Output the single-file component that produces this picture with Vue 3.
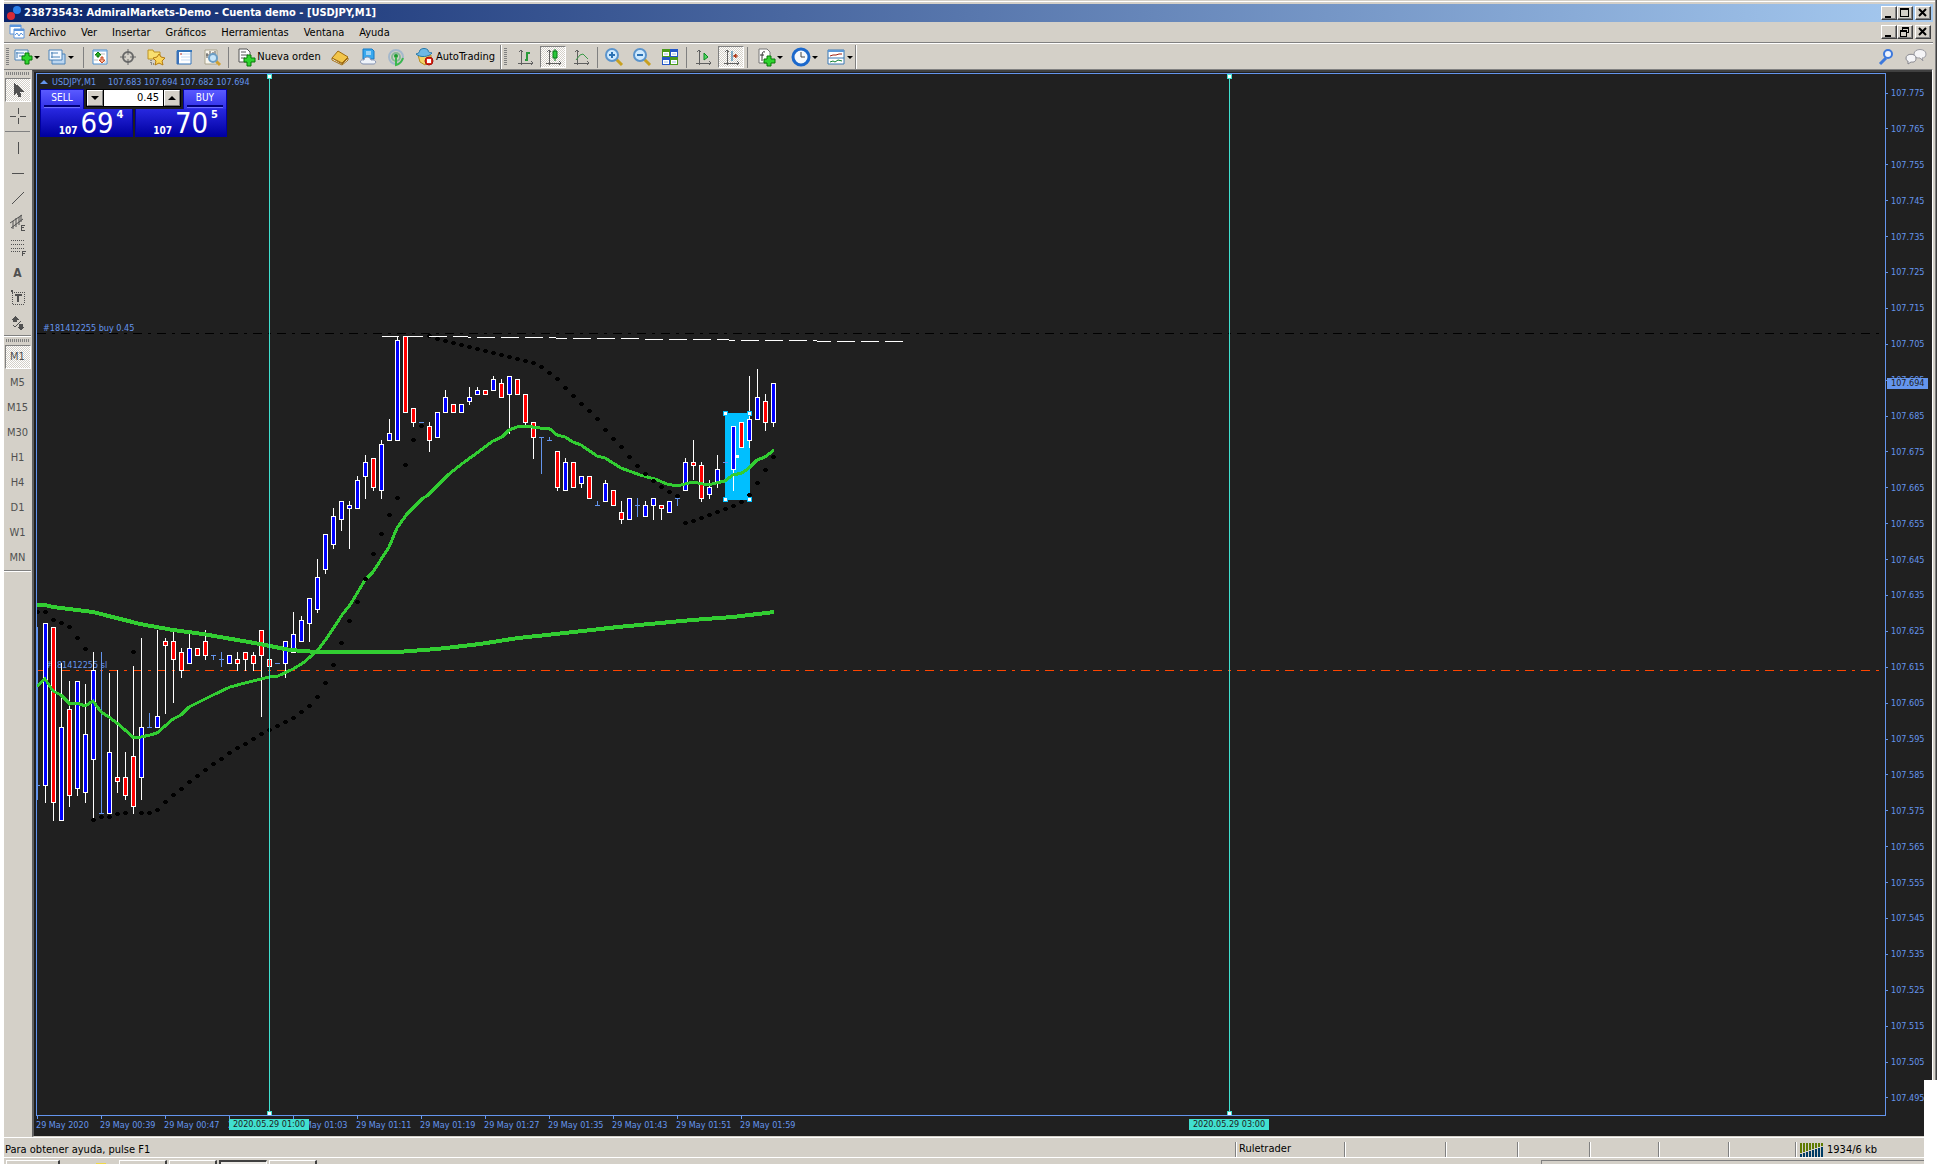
<script setup>
const menus = ['Archivo', 'Ver', 'Insertar', 'Gráficos', 'Herramientas', 'Ventana', 'Ayuda']
const frames = ['M1', 'M5', 'M15', 'M30', 'H1', 'H4', 'D1', 'W1', 'MN']
const times = ['29 May 2020', '29 May 00:39', '29 May 00:47', '29 May 00:55', '29 May 01:03', '29 May 01:11', '29 May 01:19', '29 May 01:27', '29 May 01:35', '29 May 01:43', '29 May 01:51', '29 May 01:59']
const prices = Array.from({ length: 29 }, (_, i) => (107.775 - i * 0.01).toFixed(3))
const cells = [109, 101, 72, 72, 69, 70, 67]

// kind, high, body top, body bottom, low (u = up, d = down, n = unchanged)
const bars = [
  ['n', 627, 785, 785, 800], ['u', 623, 623, 786, 803], ['d', 627, 627, 803, 821], ['u', 663, 727, 821, 821],
  ['d', 681, 709, 796, 807], ['u', 681, 681, 789, 796], ['u', 684, 734, 793, 803], ['u', 652, 670, 760, 818],
  ['n', 652, 813, 813, 814], ['u', 673, 752, 814, 814], ['d', 670, 777, 782, 793], ['d', 752, 777, 796, 800],
  ['d', 666, 756, 807, 814], ['u', 638, 727, 778, 800], ['n', 713, 727, 727, 728], ['u', 630, 716, 728, 728],
  ['d', 638, 641, 646, 714], ['d', 630, 641, 660, 703], ['d', 648, 652, 671, 678], ['u', 634, 648, 664, 664],
  ['d', 648, 648, 656, 656], ['d', 630, 641, 656, 660], ['n', 655, 655, 655, 660], ['n', 652, 659, 659, 667],
  ['u', 655, 655, 664, 664], ['d', 652, 659, 664, 671], ['d', 652, 652, 660, 671], ['d', 652, 655, 664, 671],
  ['d', 630, 630, 656, 717], ['d', 659, 659, 667, 667], ['n', 663, 663, 663, 664], ['u', 641, 641, 664, 678],
  ['u', 612, 634, 653, 653], ['u', 616, 620, 642, 642], ['u', 598, 598, 624, 642], ['u', 559, 577, 610, 613],
  ['u', 534, 534, 570, 574], ['u', 508, 516, 545, 549], ['u', 501, 501, 520, 531], ['u', 501, 505, 509, 549],
  ['u', 476, 480, 509, 509], ['u', 455, 462, 477, 499], ['d', 458, 458, 488, 491], ['u', 440, 444, 491, 499],
  ['u', 419, 433, 441, 441], ['u', 337, 340, 441, 441], ['d', 336, 336, 413, 413], ['d', 408, 408, 423, 427],
  ['n', 422, 422, 422, 423], ['d', 422, 426, 441, 452], ['u', 412, 412, 438, 438], ['u', 390, 397, 413, 413],
  ['d', 404, 404, 413, 413], ['u', 404, 404, 413, 413], ['u', 387, 397, 402, 405], ['u', 387, 390, 395, 395],
  ['d', 390, 390, 395, 395], ['u', 376, 379, 391, 391], ['d', 379, 383, 398, 398], ['u', 376, 376, 395, 434],
  ['d', 379, 379, 395, 395], ['d', 394, 394, 423, 426], ['d', 422, 422, 438, 459], ['n', 437, 437, 437, 474],
  ['n', 437, 440, 440, 441], ['d', 451, 451, 488, 491], ['u', 458, 462, 491, 491], ['d', 462, 462, 488, 488],
  ['u', 476, 476, 484, 488], ['d', 476, 476, 499, 499], ['n', 501, 505, 505, 506], ['u', 480, 483, 502, 502],
  ['d', 490, 490, 506, 506], ['d', 501, 512, 520, 524], ['u', 498, 498, 520, 520], ['n', 498, 505, 505, 517],
  ['u', 501, 505, 517, 517], ['u', 498, 498, 506, 520], ['d', 505, 505, 509, 520], ['u', 501, 501, 513, 513],
  ['n', 498, 498, 498, 506], ['u', 458, 462, 491, 491], ['d', 440, 462, 466, 480], ['d', 462, 465, 499, 502],
  ['u', 480, 487, 495, 499], ['u', 455, 469, 482, 488], ['n', 462, 462, 462, 463], ['u', 426, 426, 470, 491],
  ['d', 422, 422, 448, 448], ['u', 376, 419, 441, 448], ['u', 369, 397, 420, 420], ['d', 394, 401, 423, 431],
  ['u', 383, 383, 423, 427],
].map(([kind, high, top, bottom, low], i) => ({ kind, high, top, bottom, low, x: 37 + i * 8 }))

const sar = [
  612, 612, 620, 623, 627, 638, 649, 820, 817, 817, 814, 813, 652, 813, 813, 810, 802, 795, 789, 782, 776, 770, 764,
  759, 753, 748, 744, 739, 734, 730, 726, 722, 718, 712, 706, 697, 683, 665, 643, 621, 602, 579, 554, 534, 515, 498,
  465, 440, 426, 336, 339, 341, 343, 345, 347, 349, 351, 353, 355, 357, 359, 361, 363, 367, 373, 379, 388, 396, 404,
  411, 419, 430, 439, 447, 457, 466, 474, 481, 487, 492, 496, 523, 521, 518, 515, 512, 509, 506, 502, 495, 483, 470, 457,
]

const slow = '37,605 45,605 53,607 93,612 140,624 173,630 203,634 260,644 290,650 317,652 397,652 437,649 480,644 518,638 556,634 618,627 692,620 733,617 774,612'
const fast = '37,686 45,679 53,691 61,695 70,704 77,703 85,706 93,701 101,712 109,717 117,723 125,730 133,737 141,737 150,735 157,733 165,726 173,719 181,715 189,707 197,703 213,695 230,687 245,683 261,679 269,677 278,676 293,669 303,663 317,651 327,638 342,615 350,605 365,580 373,572 389,547 397,528 407,514 423,498 427,496 448,475 463,463 470,458 493,441 502,437 509,430 517,427 525,426 540,428 550,429 557,435 565,437 573,442 581,445 597,456 605,458 621,468 640,475 655,479 667,484 677,486 685,484 693,482 703,484 712,484 725,481 733,475 742,473 749,468 757,460 765,457 774,450'
const handles = [[725, 413], [749, 413], [725, 499], [749, 499]]
</script>

<template>
  <div class="window">
    <header class="titlebar">
      <svg class="logo" width="16" height="16" viewBox="0 0 16 16"><circle cx="10" cy="5" r="4" fill="#2a7fe8" /><circle cx="4" cy="11" r="4" fill="#d92b35" /></svg>
      <h1>23873543: AdmiralMarkets-Demo - Cuenta demo - [USDJPY,M1]</h1>
      <div class="wbuttons">
        <button aria-label="Minimizar"><svg width="14" height="12"><path d="M3 9h6v2H3z" /></svg></button>
        <button aria-label="Maximizar"><svg width="14" height="12"><path fill-rule="evenodd" d="M2 1h9v9H2zM3 3v6h7V3z" /></svg></button>
        <button class="close" aria-label="Cerrar"><svg width="14" height="12"><path d="M3 2l7 7M10 2l-7 7" class="cross" /></svg></button>
      </div>
    </header>

    <nav class="menubar">
      <svg class="mdi" width="16" height="16" viewBox="0 0 16 16"><path d="M1 1h11v9H1z" fill="#fff" stroke="#5a94dc" /><path d="M1 2h11" stroke="#5a94dc" stroke-width="2" /><path d="M5 5h10v9H5z" fill="#fff" stroke="#5a94dc" /><path d="M5 6h10" stroke="#5a94dc" stroke-width="2" /><path d="M6 11l2-2 2 3 2-3 2 2" fill="none" stroke="#5a94dc" /></svg>
      <a v-for="m in menus" :key="m" href="#">{{ m }}</a>
      <div class="wbuttons">
        <button aria-label="Minimizar gráfico"><svg width="14" height="12"><path d="M3 9h6v2H3z" /></svg></button>
        <button aria-label="Restaurar gráfico"><svg width="14" height="12"><path fill-rule="evenodd" d="M4 1h7v6H9v4H2V4h2zM5 3v1h4v2h1V3zM3 6v4h5V6z" /></svg></button>
        <button class="close" aria-label="Cerrar gráfico"><svg width="14" height="12"><path d="M3 2l7 7M10 2l-7 7" class="cross" /></svg></button>
      </div>
    </nav>

    <div class="toolbar">
      <i class="grip"></i>
      <button class="tool drop" aria-label="Nuevo gráfico"><svg width="20" height="20" viewBox="0 0 20 20"><path d="M2 3h13v10H2z" fill="#f4f9ff" stroke="#4b82b8" /><path d="M4 5v6M3 6h8M6 9h7" stroke="#4b82b8" /><path d="M9 9h3V6h4v3h3v4h-3v4h-4v-4H9z" fill="#2fd42f" stroke="#087808" /></svg></button>
      <button class="tool drop" aria-label="Perfiles"><svg width="20" height="20" viewBox="0 0 20 20"><path d="M5 7h13v10H5z" fill="#bcd6f0" stroke="#4b82b8" /><path d="M2 3h13v10H2z" fill="#f4f9ff" stroke="#4b82b8" /><path d="M5 5v6M4 6h7M4 10h9" stroke="#4b82b8" /></svg></button>
      <i class="sep"></i>
      <button class="tool" aria-label="Observación del mercado"><svg width="20" height="20" viewBox="0 0 20 20"><path d="M3 3h14v14H3z" fill="#fff" stroke="#4c8fd0" /><path d="M3 4h14" stroke="#6aa8e0" /><path d="M10 7h5M4 13h4M14 15h2" stroke="#bbb" /><path d="M8 5l3 3-2 0v2H7V8H5z" fill="#27b027" stroke="#0c7a0c" /><path d="M12 16l-3-3h2v-3h2v3h2z" fill="#f8b090" stroke="#c84820" /></svg></button>
      <button class="tool" aria-label="Ventana de datos"><svg width="20" height="20" viewBox="0 0 20 20"><circle cx="10" cy="10" r="5" fill="none" stroke="#686868" stroke-width="2" /><path d="M10 2v6M10 12v6M2 10h6M12 10h6" stroke="#686868" /></svg></button>
      <button class="tool" aria-label="Navegador"><svg width="20" height="20" viewBox="0 0 20 20"><path d="M2 3h5l1 2h6v7H2z" fill="#f8df70" stroke="#bd9222" /><path d="M5 13v4h5" fill="none" stroke="#444" stroke-dasharray="1 1" /><path d="M13 7l2 3 4 1-3 3 1 4-4-2-4 2 1-4-3-3 4-1z" fill="#fbd65a" stroke="#b47a10" /></svg></button>
      <button class="tool" aria-label="Terminal"><svg width="20" height="20" viewBox="0 0 20 20"><path d="M3 4h14v13H3z" fill="#fff" stroke="#3475ba" /><path d="M3 4h15" stroke="#3475ba" stroke-width="2" /><path d="M3 5h2v12H3z" fill="#3a70b8" /><path d="M7 7h9M7 10h9M7 13h9" stroke="#c3d9f4" /><path d="M7 6v2" stroke="#c03020" /></svg></button>
      <button class="tool" aria-label="Probador de estrategias"><svg width="20" height="20" viewBox="0 0 20 20"><path d="M3 3h12v14H3z" fill="#f8f6ee" stroke="#aaa48c" /><path d="M5 6v5M4 8h3M8 4v4M11 5v3M13 4v5" stroke="#555" /><path d="M14 14l4 4" stroke="#d0a030" stroke-width="3" /><circle cx="11" cy="11" r="4" fill="#c6e5fa" stroke="#6b9dc4" stroke-width="2" /></svg></button>
      <i class="sep"></i>
      <button class="tool text order"><svg width="20" height="20" viewBox="0 0 20 20"><path d="M3 2h8l3 3v10H3z" fill="#fff" stroke="#555" /><path d="M5 5h5M5 8h7M5 11h4" stroke="#555" /><path d="M8 11h3V8h4v3h4v4h-4v4h-4v-4H8z" fill="#2fd42f" stroke="#087808" /></svg>Nueva orden</button>
      <button class="tool" aria-label="MetaEditor"><svg width="20" height="20" viewBox="0 0 20 20"><path d="M2 11l6-7 10 6-6 6z" fill="#f2c54a" stroke="#a06c10" /><path d="M2 11l10 6 6-6v2l-6 5-10-5z" fill="#fff" stroke="#a06c10" /></svg></button>
      <button class="tool" aria-label="Alojamiento virtual"><svg width="20" height="20" viewBox="0 0 20 20"><path d="M5 2h9l2 2v8H5z" fill="#38a8ee" stroke="#1478c4" /><path d="M8 5h5M8 7h5" stroke="#fff" /><path d="M5 17c-4-1-3-5 1-4 0-4 6-4 7 0 5-1 6 3 3 4z" fill="#eef3fa" stroke="#8290b0" /></svg></button>
      <button class="tool" aria-label="Señales"><svg width="20" height="20" viewBox="0 0 20 20"><circle cx="10" cy="10" r="7" fill="none" stroke="#a4b8cc" stroke-width="2" /><circle cx="10" cy="10" r="4" fill="none" stroke="#86b898" stroke-width="2" /><circle cx="10" cy="9" r="2" fill="#1d9c30" /><path d="M10 10v8c4-1 6-4 7-7" fill="none" stroke="#3cb84c" stroke-width="2" /></svg></button>
      <button class="tool text auto"><svg width="20" height="20" viewBox="0 0 20 20"><path d="M3 8l2 7 5 3 6-5V8z" fill="#f3d466" stroke="#b88d20" /><path d="M1 7c3-1 3-1 4-4 2-2 6-2 8 0 0 3 2 2 4 3-3 4-12 5-16 1z" fill="#6db8e4" stroke="#2878a8" /><circle cx="14" cy="14" r="4" fill="#e02818" stroke="#a01008" /><path d="M12 12h4v4h-4z" fill="#fff" /></svg>AutoTrading</button>
      <i class="edge"></i>
      <i class="grip"></i>
      <button class="tool" aria-label="Gráfico de barras"><svg width="20" height="20" viewBox="0 0 20 20"><path d="M6 3v15M3 16h15M4 5l2-2 2 2M16 14l2 2-2 2" class="axis" /><path d="M12 5v9M12 6h3M10 13h2" stroke="#2a9a3a" stroke-width="2" /></svg></button>
      <button class="tool on" aria-label="Velas japonesas"><svg width="20" height="20" viewBox="0 0 20 20"><path d="M6 3v15M3 16h15M4 5l2-2 2 2M16 14l2 2-2 2" class="axis" /><path d="M12 2v12" stroke="#087818" /><path d="M10 4h4v7h-4z" fill="#28c838" stroke="#087818" /></svg></button>
      <button class="tool" aria-label="Gráfico de líneas"><svg width="20" height="20" viewBox="0 0 20 20"><path d="M6 3v15M3 16h15M4 5l2-2 2 2M16 14l2 2-2 2" class="axis" /><path d="M5 13l4-5 3-1 5 5" fill="none" stroke="#3b9a48" /></svg></button>
      <i class="sep"></i>
      <button class="tool" aria-label="Acercar"><svg width="20" height="20" viewBox="0 0 20 20"><path d="M12 12l6 6" stroke="#c8a020" stroke-width="3" /><circle cx="8" cy="8" r="6" fill="#cfeaff" stroke="#5b94cc" stroke-width="2" /><path d="M8 5v6M5 8h6" stroke="#2c72b4" stroke-width="2" /></svg></button>
      <button class="tool" aria-label="Alejar"><svg width="20" height="20" viewBox="0 0 20 20"><path d="M12 12l6 6" stroke="#c8a020" stroke-width="3" /><circle cx="8" cy="8" r="6" fill="#cfeaff" stroke="#5b94cc" stroke-width="2" /><path d="M5 8h6" stroke="#2c72b4" stroke-width="2" /></svg></button>
      <button class="tool" aria-label="Organizar ventanas"><svg width="20" height="20" viewBox="0 0 20 20"><path d="M2 2h8v8H2zM10 10h8v8h-8z" fill="#4a9a1c" /><path d="M10 2h8v8h-8zM2 10h8v8H2z" fill="#2458c8" /><path d="M3 5h6v4H3zM11 5h6v4h-6zM3 13h6v4H3zM11 13h6v4h-6z" fill="#fff" /><path d="M4 7h4M12 7h4M4 15h4M12 15h4" stroke="#9cc0e0" /></svg></button>
      <i class="sep"></i>
      <button class="tool" aria-label="Desplazamiento automático"><svg width="20" height="20" viewBox="0 0 20 20"><path d="M6 3v15M3 16h15M4 5l2-2 2 2M16 14l2 2-2 2" class="axis" /><path d="M11 6l4 4-4 3z" fill="#50d860" stroke="#0a8a20" /></svg></button>
      <button class="tool on" aria-label="Desplazar gráfico"><svg width="20" height="20" viewBox="0 0 20 20"><path d="M6 3v15M3 16h15M4 5l2-2 2 2M16 14l2 2-2 2" class="axis" /><path d="M11 4v10" stroke="#1d6fa0" /><path d="M17 9h-5M15 7l-2 2 2 2z" stroke="#b03818" fill="#b03818" /></svg></button>
      <i class="sep"></i>
      <button class="tool drop late" aria-label="Indicadores"><svg width="20" height="20" viewBox="0 0 20 20"><path d="M3 2h8l3 3v11H3z" fill="#fff" stroke="#777" /><path d="M9 5c-3-1-3 1-3 9M4 8h4" fill="none" stroke="#333" /><path d="M8 12h3V9h4v3h4v4h-4v3h-4v-3H8z" fill="#2fd42f" stroke="#087808" /></svg></button>
      <button class="tool drop late" aria-label="Periodos"><svg width="20" height="20" viewBox="0 0 20 20"><circle cx="10" cy="10" r="8" fill="#f4f8fc" stroke="#1b68cc" stroke-width="3" /><path d="M10 5v5h4" fill="none" stroke="#444" /></svg></button>
      <button class="tool drop late" aria-label="Plantillas"><svg width="20" height="20" viewBox="0 0 20 20"><path d="M2 3h16v14H2z" fill="#fff" stroke="#3b78b4" /><path d="M2 4h16" stroke="#5b98d8" stroke-width="2" /><path d="M2 11h16" stroke="#3b78b4" /><path d="M4 9l3-1 3 0 3-1 3 0" fill="none" stroke="#a02010" /><path d="M4 15l3-1 2 1 3-2 4 1" fill="none" stroke="#108030" /></svg></button>
      <i class="edge"></i>
      <div class="right">
        <button class="tool" aria-label="Buscar"><svg width="20" height="20" viewBox="0 0 20 20"><path d="M10 11l-6 6" stroke="#3c78dc" stroke-width="3" /><circle cx="12" cy="7" r="4" fill="#eef4ff" stroke="#3c78dc" stroke-width="2" /></svg></button>
        <button class="tool" aria-label="Chat"><svg width="24" height="20" viewBox="0 0 24 20"><path d="M10 7c0-6 12-6 12 0 0 3-2 4-4 4l1 3-3-3c-4 0-6-1-6-4z" fill="#f4f4f6" stroke="#9a9aa0" /><path d="M2 11c0-5 10-5 10 0s-4 4-5 4l-3 2v-3c-1 0-2-1-2-3z" fill="#f4f4f6" stroke="#85858c" /></svg></button>
      </div>
    </div>

    <main class="workspace">
      <aside class="sidebar">
        <i class="hgrip"></i>
        <button class="side on" aria-label="Cursor"><svg width="20" height="20" viewBox="0 0 20 20"><path d="M6 3v12l3-3 2 5 2-1-2-5h4z" fill="#505050" /></svg></button>
        <button class="side" aria-label="Retículo"><svg width="20" height="20" viewBox="0 0 20 20"><path d="M10 2v6M10 12v6M2 10h6M12 10h6" /></svg></button>
        <i class="hsep"></i>
        <button class="side" aria-label="Línea vertical"><svg width="20" height="20" viewBox="0 0 20 20"><path d="M10 4v12" /></svg></button>
        <button class="side" aria-label="Línea horizontal"><svg width="20" height="20" viewBox="0 0 20 20"><path d="M4 10h12" /></svg></button>
        <button class="side" aria-label="Línea de tendencia"><svg width="20" height="20" viewBox="0 0 20 20"><path d="M4 16L16 4" class="smooth" /></svg></button>
        <button class="side" aria-label="Canal equidistante"><svg width="20" height="20" viewBox="0 0 20 20"><path d="M2 10L14 2M3 15L15 6M5 8v8M8 5v9M11 4v8M13 2v7" class="smooth" /><path d="M13 12h4M13 12v5M13 14h3M13 17h4" /></svg></button>
        <button class="side" aria-label="Fibonacci"><svg width="20" height="20" viewBox="0 0 20 20"><path d="M3 2h14M3 6h14M3 10h14M3 13h9" stroke-dasharray="1 1" /><path d="M14 13h4M14 13v5M14 15h3" /></svg></button>
        <button class="side letter">A</button>
        <button class="side" aria-label="Etiqueta"><svg width="20" height="20" viewBox="0 0 20 20"><path d="M4 4h12v12H4z" fill="none" stroke-dasharray="1 1" /><path d="M7 7h7M10 7v7" stroke-width="2" /><path d="M3 3h2" stroke-width="2" /></svg></button>
        <button class="side" aria-label="Flechas"><svg width="20" height="20" viewBox="0 0 20 20"><path d="M7 3l4 4-2 0v2H5V7H3zM13 17l-4-3h2v-3h4v3h2z" fill="#505050" stroke="none" /><path d="M5 12l2 2 6-6" fill="none" class="smooth" /></svg></button>
        <i class="hline"></i>
        <i class="hgrip"></i>
        <button v-for="f in frames" :key="f" class="side" :class="{ on: f === 'M1' }">{{ f }}</button>
        <i class="hline"></i>
      </aside>

      <section class="chart">
        <div class="plot">
          <svg class="canvas">
            <g transform="translate(-37 -74)">
              <path d="M37 333H1879" stroke="#000" class="dashdot" />
              <path d="M37 670H1879" stroke="#ff4500" class="dashdot" />
              <text x="43" y="331">#181412255 buy 0.45</text>
              <text x="45" y="668">#181412255 sl</text>
              <rect x="725" y="413" width="25" height="87" fill="#00bfff" />
              <g v-for="b in bars" :key="b.x">
                <template v-if="b.kind === 'n'">
                  <rect :x="b.x" :y="b.high" width="1" :height="b.low - b.high" fill="#6495ed" />
                  <rect :x="b.x - 2" :y="b.top" width="5" height="1" fill="#6495ed" />
                </template>
                <template v-else>
                  <rect :x="b.x" :y="b.high" width="1" :height="b.low - b.high" fill="#fff" />
                  <rect :x="b.x - 2" :y="b.top" width="5" :height="b.bottom - b.top" fill="#fff" />
                  <rect :x="b.x - 1" :y="b.top + 1" width="3" :height="b.bottom - b.top - 2" :fill="b.kind === 'u' ? '#00f' : '#f00'" />
                </template>
              </g>
              <polyline :points="slow" class="ma slow" />
              <polyline :points="fast" class="ma fast" />
              <path v-for="(y, i) in sar" :key="i" :d="`M${35 + i * 8} ${y - 1}h1v-1h3v1h1v2h-1v1h-3v-1h-1z`" />
              <path d="M381 336L903 342" stroke="#fff" stroke-dasharray="18 6" />
              <path d="M269 76V1113M1229 76V1113" stroke="#40e0d0" />
              <g v-for="x in [269, 1229]" :key="x" fill="#fff" stroke="#40e0d0">
                <rect :x="x - 2" y="74" width="4" height="4" /><rect :x="x - 2" y="1111" width="4" height="4" />
              </g>
              <rect v-for="([x, y], i) in handles" :key="i" :x="x - 2" :y="y - 2" width="4" height="4" fill="#fff" stroke="#00bfff" />
              <rect x="736" y="455" width="3" height="3" fill="#fff" />
            </g>
          </svg>
          <div class="caption"><i class="tri"></i><span>USDJPY,M1</span><span>107.683 107.694 107.682 107.694</span></div>
          <div class="trade">
            <div class="top">
              <button class="tab">SELL</button>
              <div class="volume">
                <button class="spin" aria-label="Reducir volumen"><i class="down"></i></button>
                <input type="text" value="0.45" aria-label="Volumen">
                <button class="spin" aria-label="Aumentar volumen"><i class="up"></i></button>
              </div>
              <button class="tab">BUY</button>
            </div>
            <div class="quotes">
              <button class="quote"><small>107</small><b>69</b><sup>4</sup></button>
              <button class="quote"><small>107</small><b>70</b><sup>5</sup></button>
            </div>
          </div>
        </div>
        <div class="prices">
          <span v-for="p in prices" :key="p">{{ p }}</span>
          <strong>107.694</strong>
        </div>
        <div class="times">
          <span v-for="t in times" :key="t">{{ t }}</span>
          <strong class="first">2020.05.29 01:00</strong>
          <strong class="second">2020.05.29 03:00</strong>
        </div>
      </section>
    </main>

    <footer class="status">
      <span class="help">Para obtener ayuda, pulse F1</span>
      <span v-for="(w, i) in cells" :key="i" class="cell" :style="{ width: w + 'px' }">{{ i === 0 ? 'Ruletrader' : '' }}</span>
      <span class="cell net">
        <svg width="24" height="14"><g v-for="i in 8" :key="i"><rect :x="i * 3 - 3" y="0" width="2" :height="11 - i" fill="#5f7a00" /><rect :x="i * 3 - 3" :y="12 - i" width="2" :height="2 + i" fill="#003c64" /></g></svg>1934/6 kb
      </span>
    </footer>
    <div class="taskbar">
      <i class="task wide"></i><i class="sun"></i><i class="task"></i><i class="task"></i><i class="task pressed"></i><i class="task"></i><i class="tray"></i>
    </div>
    <i class="corner"></i>
  </div>
</template>

<style>
body { background: #fff; }
</style>

<style scoped>
.window { position: relative; display: flex; flex-direction: column; box-sizing: border-box; min-height: 100vh; margin-left: 4px; padding-top: 4px; background: #d4d0c8; box-shadow: inset -1px 0 #404040, inset -2px 0 #808080, inset 0 1px #d4d0c8, inset 0 2px #fff; font: 11px/14px "DejaVu Sans Condensed", "DejaVu Sans", sans-serif; color: #000; }
* { box-sizing: border-box; }
svg { display: block; flex: none; }
button { padding: 0; border: 0; background: none; color: inherit; font: inherit; }
i { flex: none; font-style: normal; }
.titlebar { display: flex; align-items: center; height: 18px; margin-right: 4px; padding: 0 2px 0 3px; background: linear-gradient(90deg, #0a246a, #a6caf0); color: #fff; }
.titlebar h1 { flex: 1; margin: 0 0 0 1px; font-size: 11px; line-height: 18px; }
.wbuttons { display: flex; margin-left: auto; }
.wbuttons button { width: 16px; height: 14px; border: 1px solid; border-color: #fff #404040 #404040 #fff; background: #d4d0c8; box-shadow: inset -1px -1px #808080; }
.wbuttons .close { margin-left: 2px; }
.wbuttons svg { fill: #000; }
.cross { fill: none; stroke: #000; stroke-width: 2; }
.menubar { display: flex; align-items: center; height: 20px; margin-right: 4px; padding: 0 2px 0 5px; }
.mdi { margin-right: 4px; }
.menubar a { padding-top: 1px; margin-right: 15px; color: #000; text-decoration: none; }
.toolbar { display: flex; align-items: center; height: 27px; margin-right: 4px; border-top: 1px solid #808080; box-shadow: inset 0 1px #fff; padding: 2px 0 0; }
.grip { width: 3px; height: 18px; margin: 0 4px 0 2px; background: repeating-linear-gradient(#808080 0 1px, #d4d0c8 1px 2px); }
.tool { display: flex; flex: none; align-items: center; justify-content: center; width: 28px; height: 22px; }
.drop { justify-content: flex-start; width: 34px; }
.drop::after { content: ""; margin-left: 1px; border: 3px solid transparent; border-top-color: #000; border-bottom: 0; }
.late { width: 35px; padding-left: 6px; }
.text { gap: 1px; white-space: nowrap; }
.order { width: 95px; }
.auto { width: 90px; }
.on { border: 1px solid; border-color: #808080 #fff #fff #808080; background: repeating-conic-gradient(#fff 0 25%, #d4d0c8 0 50%) 0 0 / 2px 2px; }
.tool.on { width: 26px; margin: 0 1px; }
.sep { width: 1px; height: 21px; margin: 0 2px; background: #808080; }
.edge { width: 2px; height: 25px; border-left: 1px solid #808080; background: #fff; }
.axis { fill: none; stroke: #606060; shape-rendering: crispEdges; }
.right { display: flex; gap: 2px; margin: 0 3px 0 auto; }
.workspace { display: flex; flex: 1; margin-right: 4px; border-top: 1px solid #808080; border-right: 1px solid #fff; }
.sidebar { display: flex; flex-direction: column; align-items: center; width: 28px; padding-right: 1px; color: #505050; }
.hgrip { width: 23px; height: 3px; margin: 2px 0 3px; background: repeating-linear-gradient(90deg, #808080 0 1px, #d4d0c8 1px 2px); }
.side { display: flex; flex: none; align-items: center; justify-content: center; width: 26px; height: 25px; }
.side svg { stroke: #505050; shape-rendering: crispEdges; }
.side .smooth { shape-rendering: auto; }
.side.on { height: 24px; margin-bottom: 1px; }
.letter { font-size: 12px; font-weight: 700; }
.hsep { width: 25px; height: 1px; margin: 3px 0; background: #808080; }
.hline { width: 27px; height: 2px; background: #808080; border-bottom: 1px solid #fff; }
.chart { display: grid; flex: 1; grid-template: 1fr 20px / 1fr 46px; min-width: 0; padding: 1px 0 0 2px; border: solid; border-width: 2px 0 1px 2px; border-color: #404040 #404040 #d4d0c8 #606060; background: #202020; color: #6495ed; font-size: 9px; line-height: 12px; }
.plot { position: relative; border: 1px solid #6495ed; }
.canvas { position: absolute; width: 100%; height: 100%; shape-rendering: crispEdges; }
.canvas text { fill: #6495ed; }
.dashdot { stroke-dasharray: 9 6 3 6; }
.ma { fill: none; stroke: #32cd32; }
.slow { stroke-width: 4; }
.fast { stroke-width: 3; }
.caption { position: absolute; top: 2px; left: 3px; display: flex; align-items: center; gap: 12px; }
.tri { margin-right: -8px; border: 4px solid transparent; border-bottom-color: #6495ed; border-top: 0; }
.trade { position: absolute; top: 15px; left: 3px; width: 187px; color: #fff; }
.top { display: flex; justify-content: space-between; height: 20px; background: #202020; }
.tab { width: 44px; border: 1px solid #0000a8; border-bottom: 0; background: linear-gradient(#5a5aff, #3030e8); font-size: 10px; }
.tab::after { content: ""; display: block; height: 2px; margin: 1px 3px 0; background: #00007a; border-bottom: 1px solid #7070ff; }
.volume { display: flex; width: 95px; height: 18px; padding: 1px; background: #000; gap: 1px; }
.spin { display: grid; place-items: center; width: 16px; border: 1px solid; border-color: #fff #808080 #808080 #fff; background: #d4d0c8; }
.down { border: 4px solid transparent; border-top-color: #000; border-bottom: 0; }
.up { border: 4px solid transparent; border-bottom-color: #000; border-top: 0; }
.volume input { flex: 1; min-width: 0; padding: 0 4px; border: 0; background: #fff; color: #000; font: inherit; font-size: 11px; text-align: right; }
.quotes { display: flex; gap: 2px; }
.quote { display: flex; flex: 1; align-items: flex-end; justify-content: flex-end; height: 28px; padding: 0 8px 0 0; border: 1px solid #0000a0; border-top: 0; background: linear-gradient(#2828e0, #0000a0); }
.quote small { margin-right: 3px; font-size: 10px; font-weight: 700; line-height: 10px; }
.quote b { font-size: 29px; font-weight: 400; line-height: 26px; }
.quote sup { align-self: flex-start; margin-left: 3px; font-size: 11px; font-weight: 700; line-height: 11px; }
.prices { position: relative; display: flex; flex-direction: column; justify-content: space-between; padding: 14px 0 12px; }
.prices span { display: flex; align-items: center; gap: 3px; }
.prices span::before { content: ""; width: 2px; height: 1px; background: #6495ed; }
.prices strong { position: absolute; top: 305px; left: 1px; width: 41px; padding-left: 4px; line-height: 11px; background: #6495ed; color: #202020; font-weight: 400; }
.times { position: relative; grid-column: 1 / -1; display: flex; }
.times span { position: relative; width: 64px; padding-top: 3px; white-space: nowrap; }
.times span::before { content: ""; position: absolute; top: 0; left: 1px; width: 1px; height: 3px; background: #6495ed; }
.times strong { position: absolute; top: 3px; width: 80px; background: #40e0d0; color: #202020; font-weight: 400; line-height: 11px; text-align: center; }
.first { left: 193px; }
.second { left: 1153px; }
.status { display: flex; align-items: center; height: 21px; padding: 4px 12px 0 1px; border-top: 1px solid #fff; border-bottom: 1px solid #fff; }
.help { flex: 1; }
.cell { height: 15px; padding-left: 3px; border-left: 1px solid #808080; box-shadow: inset 1px 0 #fff; }
.net { display: flex; align-items: center; gap: 3px; width: 130px; padding-left: 4px; }
.taskbar { display: flex; gap: 2px; height: 6px; padding: 2px 12px 0 2px; overflow: hidden; }
.task { width: 48px; border: solid; border-width: 1px 2px 0 1px; border-color: #fff #404040 #fff #fff; }
.wide { width: 54px; }
.pressed { border-width: 2px 1px 0 2px; border-color: #404040 #fff #fff #404040; background: #eae8e4; }
.sun { align-self: flex-end; width: 10px; height: 1px; margin: 0 11px 0 34px; background: #f0d848; }
.tray { width: 384px; margin-left: auto; border: 1px solid #808080; border-bottom: 0; }
.corner { position: absolute; right: 0; bottom: 0; width: 13px; height: 84px; background: #fff; }
</style>
